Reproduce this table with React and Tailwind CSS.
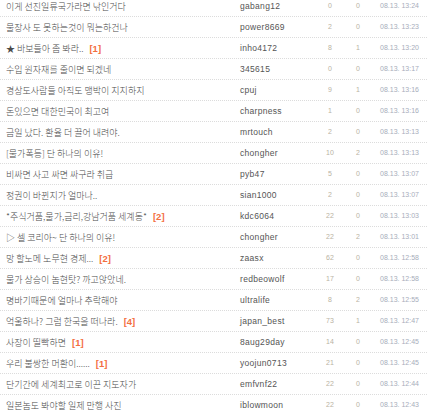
import React from "react";

const rows = [
  ["이게 선진일류국가라면 낚인거다", null, "gabang12", "0", "0", "08.13. 13:24"],
  ["물장사 도 못하는것이 뭐는하건나", null, "power8669", "2", "0", "08.13. 13:23"],
  ["★ 바보들아 좀 봐라..", "1", "inho4172", "8", "1", "08.13. 13:20"],
  ["수입 원자재를 줄이면 되겠네", null, "345615", "0", "0", "08.13. 13:17"],
  ["경상도사람들 아직도 맹박이 지지하지", null, "cpuj", "9", "1", "08.13. 13:16"],
  ["돈있으면 대한민국이 최고여", null, "charpness", "1", "0", "08.13. 13:16"],
  ["금일 났다. 환율 더 끌어 내려야.", null, "mrtouch", "2", "0", "08.13. 13:13"],
  ["[물가폭등] 단 하나의 이유!", null, "chongher", "10", "2", "08.13. 13:13"],
  ["비싸면 사고 싸면 싸구라 취급", null, "pyb47", "5", "0", "08.13. 13:07"],
  ["정권이 바뀐지가 얼마나..", null, "sian1000", "2", "0", "08.13. 13:07"],
  ["*주식거품,물가,금리,강남거품 세계동*", "2", "kdc6064", "22", "0", "08.13. 13:03"],
  ["▷ 셀 코리아~ 단 하나의 이유!", null, "chongher", "22", "2", "08.13. 13:01"],
  ["망 할노메 노무현 경제...", "2", "zaasx", "62", "0", "08.13. 12:58"],
  ["물가 상승이 놈현탓? 까고앉았네.", null, "redbeowolf", "17", "0", "08.13. 12:58"],
  ["명바기때문에 얼마나 추락해야", null, "ultralife", "8", "2", "08.13. 12:55"],
  ["억울하나? 그럼 한국을 떠나라.", "4", "japan_best", "73", "1", "08.13. 12:47"],
  ["사장이 띨빡하면", "1", "8aug29day", "14", "0", "08.13. 12:45"],
  ["우리 불쌍한 머환이......", "1", "yoojun0713", "21", "0", "08.13. 12:45"],
  ["단기간에 세계최고로 이끈 지도자가", null, "emfvnf22", "22", "0", "08.13. 12:44"],
  ["일본놈도 봐야할 일제 만행 사진", null, "iblowmoon", "22", "0", "08.13. 12:43"],
];

export default function App() {
  return (
    <div className="w-[427px] h-[415px] overflow-hidden bg-white">
      <div className="-mt-[4px] flex flex-col">
        {rows.map((r, i) => (
          <div
            key={i}
            className="flex items-center h-[21px] border-b border-dotted border-[#dcdcdc] pl-[6px]"
          >
            <div className="w-[234px] flex items-center whitespace-nowrap text-[9px] text-[#4a4a4a] font-['Noto_Sans_CJK_KR',sans-serif] font-light leading-[13px]">
              <span>{r[0]}</span>
              {r[1] && (
                <span className="ml-[6px] font-bold text-[#f36f3f] font-['Liberation_Sans',sans-serif] text-[9.5px] leading-[13px]">
                  [{r[1]}]
                </span>
              )}
            </div>
            <div className="w-[78px] whitespace-nowrap text-[8.5px] text-[#555] font-['Liberation_Sans',sans-serif] tracking-[0.3px] leading-[12px]">
              {r[2]}
            </div>
            <div className="w-[24px] text-center text-[7px] text-[#b9b2a3] font-['Liberation_Sans',sans-serif] leading-[10px]">
              {r[3]}
            </div>
            <div className="w-[32px] text-center text-[7px] text-[#b9b2a3] font-['Liberation_Sans',sans-serif] leading-[10px]">
              {r[4]}
            </div>
            <div className="w-[45px] whitespace-nowrap text-right text-[7px] text-[#a7adbb] font-['Liberation_Sans',sans-serif] leading-[10px]">
              {r[5]}
            </div>
          </div>
        ))}
      </div>
    </div>
  );
}
